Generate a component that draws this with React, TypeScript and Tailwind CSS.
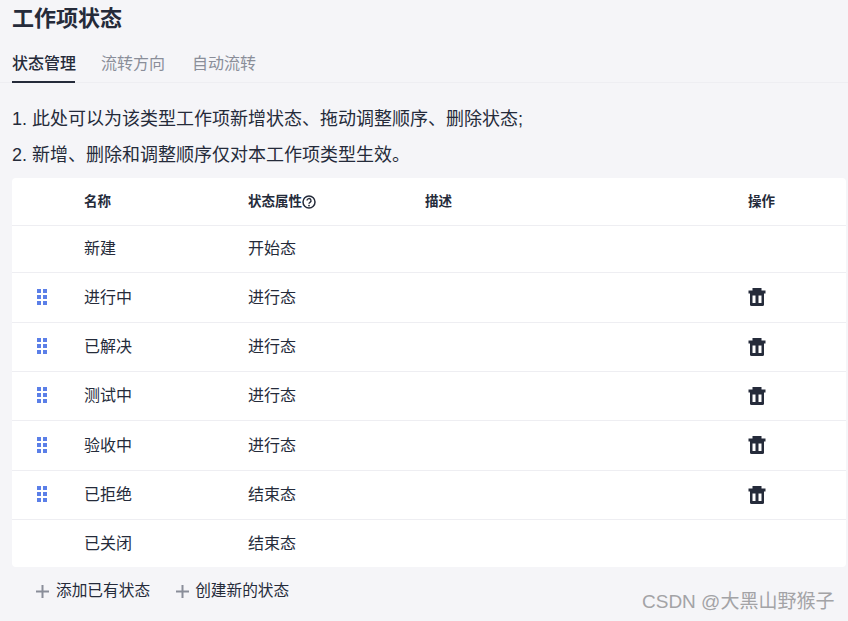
const rows = [
  { name: "新建", type: "开始态", fixed: true, h: "h-[47px]" },
  { name: "进行中", type: "进行态", fixed: false, h: "h-[50px]" },
  { name: "已解决", type: "进行态", fixed: false, h: "h-[49px]" },
  { name: "测试中", type: "进行态", fixed: false, h: "h-[49px]" },
  { name: "验收中", type: "进行态", fixed: false, h: "h-[50px]" },
  { name: "已拒绝", type: "结束态", fixed: false, h: "h-[49px]" },
  { name: "已关闭", type: "结束态", fixed: true, h: "h-[47px]" },
];

function DragHandle() {
  return (
    <svg width="11" height="17" viewBox="0 0 11 17" fill="#5b7fe8">
      <rect x="0" y="0" width="4" height="4" />
      <rect x="6" y="0" width="4" height="4" />
      <rect x="0" y="6" width="4" height="4" />
      <rect x="6" y="6" width="4" height="4" />
      <rect x="0" y="12" width="4" height="4" />
      <rect x="6" y="12" width="4" height="4" />
    </svg>
  );
}

function TrashIcon() {
  return (
    <svg width="18" height="18" viewBox="0 0 18 18" fill="#252b3a">
      <rect x="4.500" y="0" width="9" height="3" />
      <rect x="0.500" y="2.500" width="17" height="3" />
      <path d="M2 5h14v11.500a1.500 1.500 0 0 1-1.500 1.500h-11A1.500 1.500 0 0 1 2 16.500z" />
      <rect x="4.500" y="7.500" width="3" height="7.500" fill="#ffffff" />
      <rect x="10.500" y="7.500" width="3" height="7.500" fill="#ffffff" />
    </svg>
  );
}

function HelpIcon() {
  return (
    <svg width="14" height="14" viewBox="0 0 14 14" fill="none" stroke="#252b3a">
      <circle cx="7" cy="7" r="6" strokeWidth="1.500" />
      <path d="M5 5.600a2 2 0 1 1 3 1.700c-.7.4-1 .8-1 1.500" strokeWidth="1.400" />
      <circle cx="7" cy="10.600" r="0.900" fill="#252b3a" stroke="none" />
    </svg>
  );
}

function PlusIcon() {
  return (
    <svg width="13" height="13" viewBox="0 0 13 13" fill="#8a8e99">
      <rect x="5.500" y="0" width="2" height="13" />
      <rect x="0" y="5.500" width="13" height="2" />
    </svg>
  );
}

export default function App() {
  return (
    <div className="relative w-[848px] h-[621px] overflow-hidden bg-[#f5f5f8] text-[#252b3a] font-['Liberation_Sans','Noto_Sans_CJK_SC',sans-serif]">
      <h1 className="pl-3 h-[37px] text-[22px] leading-[38px] font-bold">工作项状态</h1>

      {/* tabs */}
      <div className="flex h-[46px] pt-[15px] border-b border-[#eeeef2] text-[16px] leading-[24px]">
        <div className="ml-3 w-[63px] h-[31px] border-b-2 border-[#252b3a] whitespace-nowrap font-medium">状态管理</div>
        <div className="ml-[26px] whitespace-nowrap text-[#8a8e99]">流转方向</div>
        <div className="ml-[27px] whitespace-nowrap text-[#8a8e99]">自动流转</div>
      </div>

      <div className="pl-3 pt-[18px] text-[18px] leading-[36px] h-[95px]">
        <p>1. 此处可以为该类型工作项新增状态、拖动调整顺序、删除状态;</p>
        <p>2. 新增、删除和调整顺序仅对本工作项类型生效。</p>
      </div>

      {/* table */}
      <div className="ml-3 w-[834px] bg-white rounded-[4px]">
        <div className="flex items-center h-[48px] pt-[1px] border-b border-[#eeeef2] text-[13.5px] font-bold">
          <div className="w-[72px]" />
          <div className="w-[164px]">名称</div>
          <div className="w-[177px] flex items-center">
            状态属性
            <HelpIcon />
          </div>
          <div className="w-[323px]">描述</div>
          <div>操作</div>
        </div>
        {rows.map((row, i) => (
          <div
            key={row.name}
            className={`flex items-center text-[16px] ${row.h} ${i < rows.length - 1 ? "border-b border-[#eeeef2]" : ""}`}
          >
            <div className="w-[72px] pl-[25px] pb-[1px] flex items-center">{!row.fixed && <DragHandle />}</div>
            <div className="w-[164px]">{row.name}</div>
            <div className="w-[500px]">{row.type}</div>
            <div className="flex items-center pb-[1px]">{!row.fixed && <TrashIcon />}</div>
          </div>
        ))}
      </div>

      {/* add buttons */}
      <div className="flex items-center pl-[36px] pt-[13px] text-[15.7px] leading-[22px]">
        <PlusIcon />
        <span className="ml-[7px]">添加已有状态</span>
        <span className="ml-[26px]"><PlusIcon /></span>
        <span className="ml-[6px]">创建新的状态</span>
      </div>

      <div className="absolute left-[642px] top-[589px] text-[19px] leading-[26px] whitespace-nowrap text-[#a3a3a6]">
        CSDN @大黑山野猴子
      </div>
    </div>
  );
}
